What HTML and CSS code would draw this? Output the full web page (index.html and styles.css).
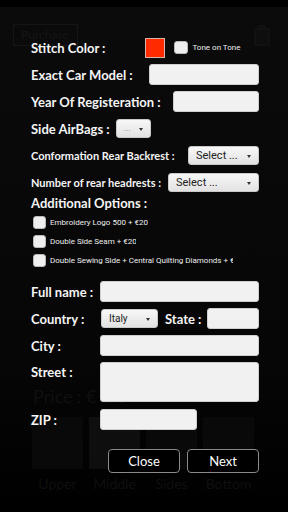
FILE: index.html
```html
<!DOCTYPE html>
<html lang="en">
<head>
  <meta charset="UTF-8">
  <meta name="viewport" content="width=device-width, initial-scale=1.0">
  <title>Purchase</title>
  <link rel="stylesheet" href="styles.css">
</head>
<body>

  <!-- Page behind the dialog -->
  <div class="page">
    <header class="page-bar">
      <span class="buy-btn">Purchase</span>
      <svg class="bar-icon" viewBox="0 0 20 24">
        <path d="M3 6h14v16H3z M7 6V3h6v3"></path>
      </svg>
    </header>
    <div class="price">Price : € 1.0</div>
    <div class="parts">
      <div class="part"><div class="swatch"></div><span>Upper</span></div>
      <div class="part"><div class="swatch lit"></div><span>Middle</span></div>
      <div class="part"><div class="swatch"></div><span>Sides</span></div>
      <div class="part"><div class="swatch"></div><span>Bottom</span></div>
    </div>
  </div>

  <!-- Order dialog -->
  <form class="order">
    <div class="row">
      <span class="label">Stitch Color :</span>
      <span class="stitch"></span>
      <input type="checkbox" class="check tone-check">
      <span class="small">Tone on Tone</span>
    </div>
    <div class="row">
      <span class="label">Exact Car Model :</span>
      <input type="text" class="field model">
    </div>
    <div class="row">
      <span class="label">Year Of Registeration :</span>
      <input type="text" class="field year">
    </div>
    <div class="row">
      <span class="label">Side AirBags :</span>
      <div class="select airbags"><span>...</span></div>
    </div>
    <div class="row">
      <span class="label label-sm">Conformation Rear Backrest :</span>
      <div class="select backrest"><span>Select ...</span></div>
    </div>
    <div class="row">
      <span class="label label-sm">Number of rear headrests :</span>
      <div class="select headrests"><span>Select ...</span></div>
    </div>

    <div class="row options-title">
      <span class="label">Additional Options :</span>
    </div>
    <div class="row option">
      <input type="checkbox" class="check">
      <span class="small opt-label">Embroidery Logo 500 + €20</span>
    </div>
    <div class="row option">
      <input type="checkbox" class="check">
      <span class="small opt-label clip-short">Double Side Seam + €20</span>
    </div>
    <div class="row option">
      <input type="checkbox" class="check">
      <span class="small opt-label clip-long">Double Sewing Side + Central Quilting Diamonds + €20</span>
    </div>

    <div class="row first-address">
      <span class="label col">Full name :</span>
      <input type="text" class="field wide">
    </div>
    <div class="row">
      <span class="label col">Country :</span>
      <div class="select country"><span>Italy</span></div>
      <span class="label state-label">State :</span>
      <input type="text" class="field wide">
    </div>
    <div class="row">
      <span class="label col">City :</span>
      <input type="text" class="field wide">
    </div>
    <div class="row street">
      <span class="label col">Street :</span>
      <textarea class="field wide area"></textarea>
    </div>
    <div class="row zip">
      <span class="label col">ZIP :</span>
      <input type="text" class="field zip-field">
    </div>

    <div class="actions">
      <button type="button" class="btn">Close</button>
      <button type="button" class="btn">Next</button>
    </div>
  </form>

</body>
</html>
```

FILE: styles.css
```css
body {
  margin: 0;
  width: 288px;
  height: 512px;
  overflow: hidden;
  position: relative;
  background: #000;
  font-family: Lato, "Open Sans", sans-serif;
}

/* Background page, mostly hidden by the dialog */
.page {
  margin-top: 7px;
  height: 505px;
  background: linear-gradient(#0b0b0b, #060606 70%, #000);
  display: flex;
  flex-direction: column;
}

.page-bar {
  display: flex;
  justify-content: space-between;
  align-items: center;
  padding: 16px 16px 0 13px;
}

.buy-btn {
  width: 56px;
  height: 20px;
  padding-left: 7px;
  border: 1px solid #151515;
  color: #161616;
  font-size: 12px;
  line-height: 20px;
}

.bar-icon {
  width: 20px;
  height: 24px;
  fill: #0e0e0e;
  stroke: #141414;
  stroke-width: 1.5;
}

.price {
  margin: 338px 0 0 33px;
  font-size: 18px;
  color: #101010;
}

.parts {
  display: flex;
  gap: 6px;
  padding-left: 32px;
  margin-top: 10px;
}

.part {
  width: 51px;
  display: flex;
  flex-direction: column;
  align-items: center;
  gap: 6px;
  font-size: 14px;
  color: #0f0f0f;
}

.swatch {
  width: 51px;
  height: 52px;
  background: #090909;
}

.swatch.lit {
  background: #0e0e0e;
}

/* Dialog */
.order {
  position: absolute;
  top: 0;
  left: 0;
  right: 0;
  bottom: 0;
  margin: 0;
  padding: 37px 29px 0 31px;
  display: flex;
  flex-direction: column;
  gap: 6px;
}

.row {
  display: flex;
  align-items: center;
  height: 21px;
}

.label {
  color: #f4f4f4;
  font-size: 13px;
  font-weight: 700;
  white-space: nowrap;
}

.label-sm {
  font-size: 11px;
}

.label.col {
  width: 69px;
  flex: none;
}

.small {
  color: #eeeeee;
  font-family: Roboto, sans-serif;
  font-size: 8px;
  white-space: nowrap;
}

.stitch {
  width: 18px;
  height: 18px;
  margin-left: 40px;
  border: 1px solid #d8b3aa;
  background: #ff2a00;
}

.check {
  appearance: none;
  margin: 0;
  width: 13px;
  height: 13px;
  border: 1px solid #b9b9b9;
  border-radius: 3px;
  background: #efefef;
  box-sizing: border-box;
}

.tone-check {
  width: 14px;
  margin-left: 9px;
  margin-right: 4px;
}

.field {
  height: 21px;
  box-sizing: border-box;
  margin: 0 0 0 auto;
  border: 1px solid #cfcfcf;
  border-radius: 3px;
  background: #f1f1f1;
  padding: 0 4px;
  font: 11px Roboto, sans-serif;
}

.model { width: 110px; }
.year { width: 86px; }
.wide { flex: 1; width: auto; min-width: 0; }
.zip-field { width: 97px; margin-left: 0; }

.select {
  position: relative;
  height: 19px;
  box-sizing: border-box;
  margin-left: auto;
  padding-left: 7px;
  border: 1px solid #c9c9c9;
  border-radius: 3px;
  background: linear-gradient(#f7f7f7, #e2e2e2);
  color: #222;
  font: 11px/17px Roboto, sans-serif;
}

.select:after {
  content: "";
  position: absolute;
  right: 7px;
  top: 8px;
  border: 2px solid transparent;
  border-top: 3px solid #333;
}

.airbags {
  width: 35px;
  margin-left: 6px;
  color: #888;
  font-size: 9px;
}

.backrest { width: 71px; }
.headrests { width: 91px; }

.country {
  width: 57px;
  margin-left: 1px;
  font-size: 10px;
}

.state-label {
  margin: 0 6px 0 7px;
}

.options-title {
  margin-top: -3px;
  height: 14px;
}

.option {
  height: 13px;
}

.option .check {
  margin-left: 2px;
  margin-right: 4px;
}

.opt-label {
  overflow: hidden;
}

.clip-short { width: 86px; }
.clip-long { width: 183px; }

.first-address {
  margin-top: 8px;
}

.street {
  height: 40px;
  align-items: flex-start;
}

.street .label {
  line-height: 21px;
}

.area {
  height: 40px;
  resize: none;
}

.zip {
  margin-top: 1px;
}

.actions {
  display: flex;
  justify-content: flex-end;
  gap: 7px;
  margin-top: 13px;
}

.btn {
  width: 72px;
  height: 24px;
  border: 1px solid #8a8a8a;
  border-radius: 4px;
  background: #000;
  color: #fff;
  font: 13px Lato, sans-serif;
}
```
